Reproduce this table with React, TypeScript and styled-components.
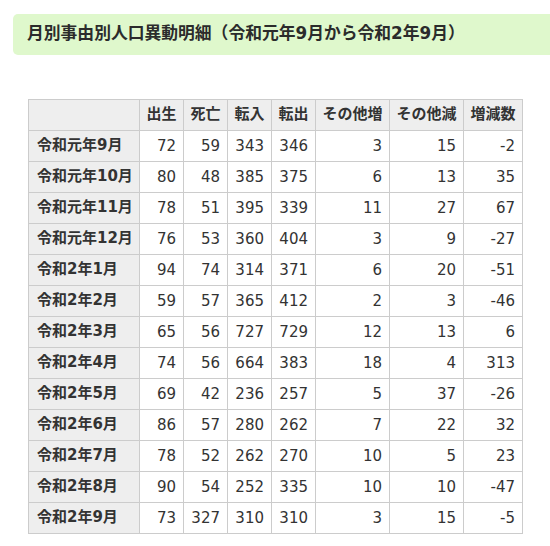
import React from 'react';
import styled, {createGlobalStyle} from "styled-components";

const GlobalStyle = createGlobalStyle`
    html, body {
        margin: 0;
        padding: 0;
        background: #fff;
    }
    body {
        font-family: "DejaVu Sans", "Noto Sans CJK JP", sans-serif;
        color: #333;
        overflow: hidden;
    }
`

type Row = [string, number, number, number, number, number, number, number]

const rows: Row[] = [
    ['令和元年9月', 72, 59, 343, 346, 3, 15, -2],
    ['令和元年10月', 80, 48, 385, 375, 6, 13, 35],
    ['令和元年11月', 78, 51, 395, 339, 11, 27, 67],
    ['令和元年12月', 76, 53, 360, 404, 3, 9, -27],
    ['令和2年1月', 94, 74, 314, 371, 6, 20, -51],
    ['令和2年2月', 59, 57, 365, 412, 2, 3, -46],
    ['令和2年3月', 65, 56, 727, 729, 12, 13, 6],
    ['令和2年4月', 74, 56, 664, 383, 18, 4, 313],
    ['令和2年5月', 69, 42, 236, 257, 5, 37, -26],
    ['令和2年6月', 86, 57, 280, 262, 7, 22, 32],
    ['令和2年7月', 78, 52, 262, 270, 10, 5, 23],
    ['令和2年8月', 90, 54, 252, 335, 10, 10, -47],
    ['令和2年9月', 73, 327, 310, 310, 3, 15, -5],
]

const headers = ['出生', '死亡', '転入', '転出', 'その他増', 'その他減', '増減数']
const colWidths = [111, 44, 44, 44, 44, 74, 74, 59]

export default function App() {
    return (
        <>
            <GlobalStyle/>
            <Page>
                <Heading>月別事由別人口異動明細（令和元年9月から令和2年9月）</Heading>
                <Table>
                    <colgroup>
                        {colWidths.map((w, i) => <col key={i} style={{width: w}}/>)}
                    </colgroup>
                    <thead>
                    <tr>
                        <HeadCell/>
                        {headers.map(h => <HeadCell key={h}>{h}</HeadCell>)}
                    </tr>
                    </thead>
                    <tbody>
                    {rows.map(([label, ...nums]) => (
                        <tr key={label}>
                            <RowHead>{label}</RowHead>
                            {nums.map((n, i) => <NumCell key={i}>{n}</NumCell>)}
                        </tr>
                    ))}
                    </tbody>
                </Table>
            </Page>
        </>
    );
}

const Page = styled.div`
    width: 550px;
    height: 546px;
    padding-top: 14px;
    box-sizing: border-box;
`

const Heading = styled.h2`
    margin: 0 0 0 13px;
    width: 560px;
    height: 41px;
    box-sizing: border-box;
    padding: 0 14px 3px;
    display: flex;
    align-items: center;
    background: #dff8cc;
    border-radius: 5px 0 0 5px;
    font-size: 16.8px;
    line-height: 20px;
    font-weight: 700;
    color: #2b2b2b;
    white-space: nowrap;
`

const Table = styled.table`
    margin: 44px 0 0 28px;
    width: 494px;
    table-layout: fixed;
    border-collapse: collapse;
    font-size: 15px;
`

const Cell = styled.td`
    height: 31px;
    padding: 0 7px;
    border: 1px solid #ccc;
    box-sizing: border-box;
    white-space: nowrap;
    line-height: 18px;
    vertical-align: middle;
`

const HeadCell = styled(Cell).attrs({as: 'th'})`
    background: #eee;
    font-weight: 700;
    text-align: center;
    padding: 0 0 3px;
`

const RowHead = styled(Cell).attrs({as: 'th'})`
    background: #eee;
    font-weight: 700;
    text-align: left;
    padding: 0 7px 3px 8px;
`

const NumCell = styled(Cell)`
    text-align: right;
`
